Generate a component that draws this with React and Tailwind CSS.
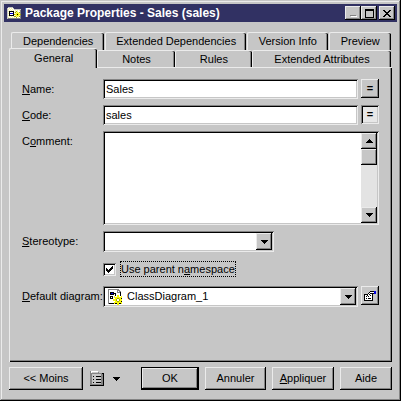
import React, { useState } from 'react';

const RAISED =
  'bg-[#c6c6c6] shadow-[inset_-1px_-1px_#000,inset_1px_1px_#ebebeb,inset_-2px_-2px_#848484]';
const SUNKEN =
  'bg-white shadow-[inset_1px_1px_#848484,inset_-1px_-1px_#ebebeb,inset_2px_2px_#000,inset_-2px_-2px_#c6c6c6]';

const PALETTE = {
  k: '#000000',
  w: '#ffffff',
  g: '#848484',
  l: '#c6c6c6',
  y: '#f7f70a',
  p: '#f7f7a5',
  o: '#a5a500',
  b: '#0000e0',
};

const FOLDER = [
  '.lllll.........',
  'lwpwpwl........',
  'lpwpwpwlllllll.',
  'lwpwpwpwpwpwpg.',
  'lpkkkkkwpopwwg.',
  'lwkwwwkpopypog.',
  'lpkbbbkwpyyypg.',
  'lwkwwwkoyykyyo.',
  'lpkkkkkwpyyypg.',
  'lwpwpwpoopypog.',
  'lpwpwpwpwowpwg.',
  'lggggggggggggg.',
];

const DIAGRAM = [
  '.ggggggggggg...',
  '.gwwwwwwwwggg..',
  '.gwwwwwwwwgwgg.',
  '.gwkkkkwwwgggk.',
  '.gwkbbkkkwwwwk.',
  '.gwkkkkwkwwwwk.',
  '.gwwwwwwkwyywk.',
  '.gwkkkwywwyywwy',
  '.gwkwkwyyyyyyyy',
  '.gwkkkwwyyooyyk',
  '.gwwwwyyyowwoyy',
  '.gwwwwyyyowwoyy',
  '.gwwwwwwyyooyyk',
  '.gwwwwwyyyyyyyy',
  '.gkkkkkykkyykky',
  '..........yy...',
];

const PROPERTIES = [
  '......kkkkbb',
  '.....kwwwwbb',
  '....kwkkkkbb',
  'kkkkwkwwk...',
  'kwwkwwkwk...',
  'kwkwkwwwk...',
  'kwwwwwwwk...',
  'kwkwkkkwk...',
  'kwwwwwwwk...',
  'kkkkkkkkk...',
];

const LIST = [
  'gwwwwwww......',
  'gwllllllg.....',
  'ggggggggggggkk',
  'gglllllllllggk',
  'gglllllllllggk',
  'gglkllkkkkkggk',
  'gglllllllllggk',
  'gglllllllllggk',
  'gglkllkkkkkggk',
  'gglllllllllggk',
  'gglllllllllggk',
  'gglkllkkkkkggk',
  'gglllllllllggk',
  'gggggggggggggk',
  'kkkkkkkkkkkkkk',
];

function PixelIcon({ rows }) {
  const width = Math.max(...rows.map((row) => row.length));
  return (
    <svg
      width={width}
      height={rows.length}
      viewBox={`0 0 ${width} ${rows.length}`}
      shapeRendering="crispEdges"
      className="shrink-0"
      aria-hidden="true"
    >
      {rows.flatMap((row, y) =>
        [...row].map((c, x) =>
          PALETTE[c] ? <rect key={`${x}-${y}`} x={x} y={y} width="1" height="1" fill={PALETTE[c]} /> : null
        )
      )}
    </svg>
  );
}

const ARROW_DOWN = ['kkkkkkk', '.kkkkk.', '..kkk..', '...k...'];
const ARROW_UP = ['...k...', '..kkk..', '.kkkkk.', 'kkkkkkk'];
const MINIMIZE = ['.......', '.......', '.......', '.......', '.......', '.......', 'gggggg.', '.wwwwww'];
const MAXIMIZE = [
  'kkkkkkkkk',
  'kkkkkkkkk',
  'k.......k',
  'k.......k',
  'k.......k',
  'k.......k',
  'k.......k',
  'k.......k',
  'kkkkkkkkk',
];
const CLOSE = ['kk....kk', '.kk..kk.', '..kkkk..', '...kk...', '..kkkk..', '.kk..kk.', 'kk....kk'];
const CHECK = ['......k', '.....kk', 'k...kkk', 'kk.kkk.', 'kkkkk..', '.kkk...', '..k....'];

function TitleButton({ label, rows }) {
  return (
    <button type="button" aria-label={label} className={`flex h-[14px] w-4 items-center justify-center ${RAISED}`}>
      <PixelIcon rows={rows} />
    </button>
  );
}

function Tab({ className, active, children }) {
  return (
    <button
      type="button"
      role="tab"
      aria-selected={!!active}
      className={`rounded-t-[2px] border-t border-l border-[#ebebeb] bg-[#c6c6c6] whitespace-nowrap shadow-[inset_-1px_0_#000,inset_-2px_0_#848484] ${className}`}
    >
      {children}
    </button>
  );
}

// Label column plus the control beside it
function Row({ id, label, children }) {
  return (
    <div className="flex items-start">
      <label htmlFor={id} className="w-[81px] shrink-0 pt-[2px] leading-4 whitespace-nowrap">
        {label}
      </label>
      {children}
    </div>
  );
}

function Select({ id, className, icon, options }) {
  return (
    <div className={`relative flex h-[21px] items-center pl-1 ${SUNKEN} ${className}`}>
      {icon}
      <select id={id} className="h-full min-w-0 flex-1 appearance-none bg-transparent pl-[5px] outline-none">
        {options.map((option) => (
          <option key={option}>{option}</option>
        ))}
      </select>
      <span
        className={`pointer-events-none absolute top-[2px] right-[2px] flex h-[17px] w-4 items-center justify-center ${RAISED}`}
      >
        <PixelIcon rows={ARROW_DOWN} />
      </span>
    </div>
  );
}

function DialogButton({ className, children }) {
  return (
    <button type="button" className={`h-[23px] whitespace-nowrap ${RAISED} ${className}`}>
      {children}
    </button>
  );
}

export default function App() {
  const [name, setName] = useState('Sales');
  const [code, setCode] = useState('sales');
  const [comment, setComment] = useState('');
  const [useParent, setUseParent] = useState(true);

  return (
    <div className="flex min-h-screen flex-col bg-[#c6c6c6] p-1 font-['Liberation_Sans',Arial,sans-serif] text-[11px] text-black shadow-[inset_-1px_-1px_#000,inset_1px_1px_#c6c6c6,inset_-2px_-2px_#848484,inset_2px_2px_#ebebeb]">
      <header className="flex h-[18px] items-center bg-[#313163] pr-[2px] pl-[3px]">
        <PixelIcon rows={FOLDER} />
        <h1 className="flex-1 pl-[3px] text-[12px] font-bold whitespace-nowrap text-white">
          Package Properties - Sales (sales)
        </h1>
        <TitleButton label="Minimize" rows={MINIMIZE} />
        <TitleButton label="Maximize" rows={MAXIMIZE} />
        <div className="w-[2px]" />
        <TitleButton label="Close" rows={CLOSE} />
      </header>

      <main className="flex flex-1 flex-col px-[5px] pt-[10px]">
        <div role="tablist" className="pr-px">
          <div className="flex h-4 items-stretch gap-px pl-[2px]">
            <Tab className="h-[18px] flex-[93_1_0]">Dependencies</Tab>
            <Tab className="h-[18px] flex-[141_1_0]">Extended Dependencies</Tab>
            <Tab className="h-[18px] flex-[80_1_0]">Version Info</Tab>
            <Tab className="h-[18px] flex-[62_1_0]">Preview</Tab>
          </div>
          <div className="flex h-[19px] items-end">
            <Tab active className="relative -mb-px h-5 flex-[88_1_0]">
              General
            </Tab>
            <Tab className="h-[17px] flex-[77_1_0]">Notes</Tab>
            <Tab className="h-[17px] flex-[77_1_0]">Rules</Tab>
            <Tab className="h-[17px] flex-[139_1_0]">Extended Attributes</Tab>
          </div>
        </div>

        <section
          role="tabpanel"
          aria-label="General"
          className="flex flex-1 flex-col gap-[6px] border-t border-l border-[#ebebeb] pt-[11px] pr-[13px] pb-[11px] pl-3 shadow-[inset_-1px_-1px_#000,inset_-2px_-2px_#848484]"
        >
          <Row id="name" label={<><u>N</u>ame:</>}>
            <input
              id="name"
              value={name}
              onChange={(e) => setName(e.target.value)}
              className={`h-5 min-w-0 flex-1 px-[3px] outline-none ${SUNKEN}`}
            />
            <button type="button" className={`ml-[3px] h-[19px] w-[18px] font-bold ${RAISED}`}>
              =
            </button>
          </Row>
          <Row id="code" label={<><u>C</u>ode:</>}>
            <input
              id="code"
              value={code}
              onChange={(e) => setCode(e.target.value)}
              className={`h-5 min-w-0 flex-1 px-[3px] outline-none ${SUNKEN}`}
            />
            <button
              type="button"
              aria-pressed="true"
              className="ml-[3px] h-[19px] w-[18px] bg-[#e7e7e7] font-bold shadow-[inset_1px_1px_#848484,inset_-1px_-1px_#ebebeb,inset_2px_2px_#000,inset_-2px_-2px_#c6c6c6]"
            >
              =
            </button>
          </Row>
          <Row id="comment" label={<>C<u>o</u>mment:</>}>
            <div className={`flex h-[94px] min-w-0 flex-1 p-[2px] ${SUNKEN}`}>
              <textarea
                id="comment"
                value={comment}
                onChange={(e) => setComment(e.target.value)}
                className="min-w-0 flex-1 resize-none px-1 outline-none"
              />
              <div className="flex w-4 flex-col bg-[#e3e3e3]">
                <button type="button" aria-label="Scroll up" className={`flex h-4 items-center justify-center ${RAISED}`}>
                  <PixelIcon rows={ARROW_UP} />
                </button>
                <div className={`h-4 ${RAISED}`} />
                <button type="button" aria-label="Scroll down" className={`mt-auto flex h-4 items-center justify-center ${RAISED}`}>
                  <PixelIcon rows={ARROW_DOWN} />
                </button>
              </div>
            </div>
          </Row>
          <Row id="stereotype" label={<><u>S</u>tereotype:</>}>
            <Select id="stereotype" className="w-[171px]" options={['']} />
          </Row>
          <div className="flex h-[22px] items-center pl-[81px]">
            <span className="relative flex h-[13px] w-[13px]">
              <input
                id="namespace"
                type="checkbox"
                checked={useParent}
                onChange={(e) => setUseParent(e.target.checked)}
                className={`h-[13px] w-[13px] appearance-none outline-none ${SUNKEN}`}
              />
              {useParent && (
                <span className="pointer-events-none absolute inset-[3px]">
                  <PixelIcon rows={CHECK} />
                </span>
              )}
            </span>
            <label htmlFor="namespace" className="ml-1 border border-dotted border-black leading-[14px] whitespace-nowrap">
              Use parent n<u>a</u>mespace
            </label>
          </div>
          <Row id="diagram" label={<><u>D</u>efault diagram:</>}>
            <Select id="diagram" className="min-w-0 flex-1" icon={<PixelIcon rows={DIAGRAM} />} options={['ClassDiagram_1']} />
            <button
              type="button"
              aria-label="Properties"
              className={`ml-[3px] flex h-[19px] w-[18px] items-center justify-center ${RAISED}`}
            >
              <PixelIcon rows={PROPERTIES} />
            </button>
          </Row>
        </section>

        <footer className="flex items-center pt-[5px] pb-[7px]">
          <DialogButton className="w-[74px]">&lt;&lt; Moins</DialogButton>
          <button type="button" aria-label="Menu" className="ml-[7px] flex items-center gap-[9px]">
            <PixelIcon rows={LIST} />
            <PixelIcon rows={ARROW_DOWN} />
          </button>
          <div className="ml-auto flex gap-[6px]">
            <DialogButton className="w-[58px] border border-black">OK</DialogButton>
            <DialogButton className="w-[61px]">Annuler</DialogButton>
            <DialogButton className="w-[62px]">
              <u>A</u>ppliquer
            </DialogButton>
            <DialogButton className="w-[52px]">Aide</DialogButton>
          </div>
        </footer>
      </main>
    </div>
  );
}
